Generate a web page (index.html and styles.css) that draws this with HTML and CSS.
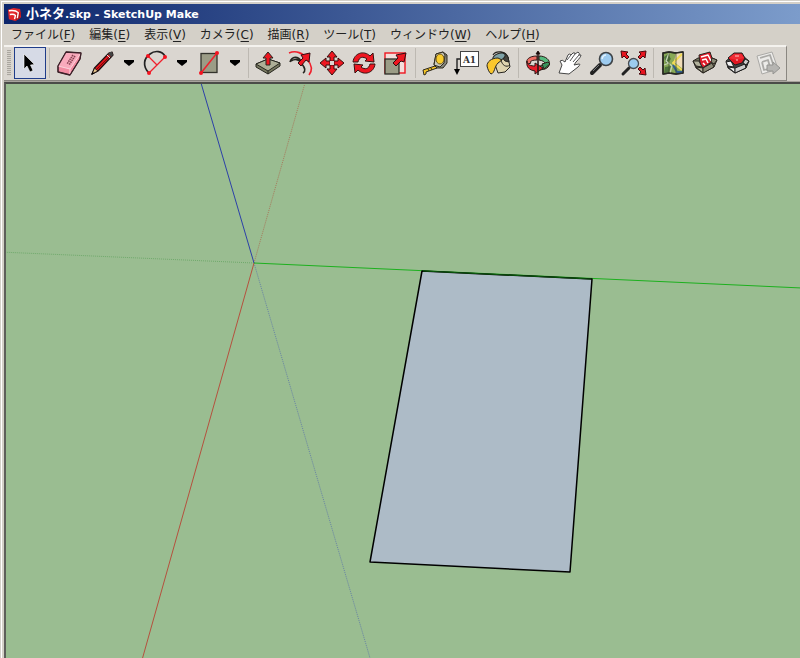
FILE: index.html
```
<!DOCTYPE html>
<html lang="ja">
<head>
    <meta charset="UTF-8">
    <meta name="viewport" content="width=device-width, initial-scale=1.0">
    <title>小ネタ.skp - SketchUp Make</title>
    <link rel="stylesheet" href="styles.css">
</head>
<body>
<div class="window">
    <header class="titlebar">
        <svg class="logo" viewBox="0 0 16 16" aria-hidden="true">
            <path d="M1 3 L7 1 L14 2 L15 11 L9 15 L2 13Z" fill="#e3262b"/>
            <path d="M10 7 L15 5 L14 12 L9 15Z" fill="#b5151b"/>
            <path d="M2 4 Q9 3 12 6 L11 12 M3 8 Q7 7 9 9 L8 13" fill="none" stroke="#fff" stroke-width="1.500"/>
        </svg>
        <h1><span class="file">小ネタ</span>.skp - SketchUp Make</h1>
    </header>

    <nav class="menubar">
        <button type="button">ファイル(<u>F</u>)</button>
        <button type="button">編集(<u>E</u>)</button>
        <button type="button">表示(<u>V</u>)</button>
        <button type="button">カメラ(<u>C</u>)</button>
        <button type="button">描画(<u>R</u>)</button>
        <button type="button">ツール(<u>T</u>)</button>
        <button type="button">ウィンドウ(<u>W</u>)</button>
        <button type="button">ヘルプ(<u>H</u>)</button>
    </nav>

    <div class="toolbar-row">
    <div class="toolbar" role="toolbar" aria-label="ツール">
        <div class="grip"></div>
        <div class="group">
            <button type="button" class="tool active" aria-label="選択">
                <svg viewBox="0 0 32 32"><path d="M10 7 L10 22 L13 19 L16 25 L19 23.500 L16.500 18 L20.500 17.500Z" fill="#000" stroke="#fff" stroke-width=".6"/></svg>
            </button>
        </div>
        <div class="group draw">
            <button type="button" class="tool" aria-label="消しゴム">
                <svg viewBox="0 0 32 32" stroke="#3c2028" stroke-linejoin="round">
                    <path d="M13 5 L28 6 L27 12 L17 28 L5 25 L5 19Z" fill="#f28ba1"/>
                    <path d="M13 5 L28 6 L17 22 L5 19Z" fill="#f9aabc" stroke="none"/>
                    <path d="M5 19 L17 22 L17 28 M17 22 L28 6" fill="none" stroke="#fbd3dc"/>
                    <path d="M13 5 L28 6 L27 12 L17 28 L5 25 L5 19Z" fill="none" stroke-width="1.300"/>
                    <path d="M20 8 L14 17 M22 9 L16 18" stroke="#84404f" stroke-width="1.600" stroke-dasharray="1.500 .7"/>
                </svg>
            </button>
            <div class="split">
                <button type="button" class="tool" aria-label="線">
                    <svg viewBox="0 0 32 32" stroke-linejoin="round">
                        <path d="M6 27 L8.500 21 L23 6 L26 5 L27 8 L12 24Z" fill="#e01118" stroke="#1c1010" stroke-width="1.200"/>
                        <path d="M6 27 L8.500 21 L12 24Z" fill="#e5c58c" stroke="#1c1010"/>
                        <path d="M5 28 L6.500 25 L8.500 26.500Z"/>
                        <path d="M11 22 L23 10" stroke="#7a080c"/>
                        <path d="M22 7 L25 10 L27 8 L26 5 L24 5Z" fill="#444"/><path d="M21 8 L24 11" stroke="#ddd"/>
                    </svg>
                </button>
                <button type="button" class="drop" aria-label="線のメニュー"><svg viewBox="0 0 12 8"><path d="M1 1H11V3L6 7L1 3Z"/></svg></button>
            </div>
            <div class="split">
                <button type="button" class="tool" aria-label="円弧">
                    <svg viewBox="0 0 32 32" fill="none">
                        <path d="M10 26 C3 19 5 11 11 7 C16 3 23 4 26 9" stroke="#222" stroke-width="1.700"/>
                        <path d="M9 9 L18 18 M26 10 L10 26" stroke="#f0202c" stroke-width="1.300"/>
                        <g fill="#f51320"><circle cx="9" cy="9" r="2"/><circle cx="26" cy="10" r="2"/><circle cx="10" cy="26" r="2"/></g>
                    </svg>
                </button>
                <button type="button" class="drop" aria-label="円弧のメニュー"><svg viewBox="0 0 12 8"><path d="M1 1H11V3L6 7L1 3Z"/></svg></button>
            </div>
            <div class="split">
                <button type="button" class="tool" aria-label="長方形">
                    <svg viewBox="0 0 32 32">
                        <rect x="9" y="6.500" width="16" height="19" fill="#9b9c86" stroke="#33332c" stroke-width="1.300"/>
                        <path d="M9 26 L25 6" stroke="#f0202c" stroke-width="1.500"/>
                        <circle cx="9" cy="26" r="2" fill="#f51320"/><circle cx="25" cy="6" r="2" fill="#f51320"/>
                    </svg>
                </button>
                <button type="button" class="drop" aria-label="長方形のメニュー"><svg viewBox="0 0 12 8"><path d="M1 1H11V3L6 7L1 3Z"/></svg></button>
            </div>
        </div>
        <div class="group">
            <button type="button" class="tool" aria-label="プッシュ/プル">
                <svg viewBox="0 0 32 32" stroke="#26261f" stroke-linejoin="round">
                    <path d="M4 17 L16 12 L28 16 L28 19 L16 27 L4 20Z" fill="#77785f"/>
                    <path d="M4 17 L16 12 L28 16 L16 24Z" fill="#adae96"/>
                    <path d="M16 24 V27" fill="none"/>
                    <path d="M14 18 V11 H11 L16 5 L21 11 H18 V18Z" fill="#ee1620"/>
                </svg>
            </button>
            <button type="button" class="tool" aria-label="オフセット">
                <svg viewBox="0 0 32 32" fill="none">
                    <path d="M5 6 C12 3 19 6 23 12 C28 18 29 23 25 28" stroke="#f0202c" stroke-width="1.600"/>
                    <path d="M6 15 C8 9 14 9 17 14 M7 14 C12 11 16 13 18 17 C21 21 22 24 19 26" stroke="#25251f" stroke-width="1.600"/>
                    <path d="M14 16 L19 11 L17 8 L26 6 L25 15 L22 13 L17 19Z" fill="#ee1620" stroke="#330a0d" stroke-linejoin="round"/>
                </svg>
            </button>
            <button type="button" class="tool" aria-label="移動">
                <svg viewBox="0 0 32 32" fill="#ee1620" stroke="#35100f" stroke-linejoin="round">
                    <path d="M16 4 L21 10 H18 V14 H14 V10 H11Z"/><path d="M16 28 L11 22 H14 V18 H18 V22 H21Z"/>
                    <path d="M4 16 L10 11 V14 H14 V18 H10 V21Z"/><path d="M28 16 L22 21 V18 H18 V14 H22 V11Z"/>
                    <rect x="14" y="14" width="4" height="4" fill="#ddd9d2" stroke="none"/>
                </svg>
            </button>
            <button type="button" class="tool" aria-label="回転">
                <svg viewBox="0 0 32 32" fill="#ee1620" stroke="#35100f" stroke-linejoin="round">
                    <path d="M5 15 C6 6 16 3 22 9 L25 6 L26 15 L17 14 L19 12 C15 9 11 10 10 15Z"/>
                    <path d="M27 17 C26 26 16 29 10 23 L7 26 L6 17 L15 18 L13 20 C17 23 21 22 22 17Z"/>
                </svg>
            </button>
            <button type="button" class="tool" aria-label="尺度">
                <svg viewBox="0 0 32 32">
                    <rect x="5" y="6" width="20" height="20" fill="#f3dedb" stroke="#ee1620" stroke-width="1.400"/>
                    <rect x="5" y="12" width="14" height="15" fill="#9b9c86" stroke="#2c2c25" stroke-width="1.300"/>
                    <path d="M13 16 L18 11 L16 8 L26 6 L24 15 L21 14 L16 19Z" fill="#ee1620" stroke="#330a0d" stroke-linejoin="round"/>
                </svg>
            </button>
        </div>
        <div class="group">
            <button type="button" class="tool" aria-label="メジャー">
                <svg viewBox="0 0 32 32" stroke="#2e2a1d" stroke-linejoin="round">
                    <path d="M17 7 L24 5 L28 8 L28 16 L24 21 L17 21 L15 17Z" fill="#85857d"/>
                    <path d="M17 7 L24 5 L26 8 L25 16 L21 20 L15 18Z" fill="#c9c9bd"/>
                    <ellipse cx="21" cy="12" rx="4" ry="5" fill="#f8cc2d" stroke="#6d5412"/>
                    <path d="M16 19 L4 23 L5 28 L7 27 L7 25 L18 21Z" fill="#f4c427"/>
                    <path d="M9 22 L10 24 M12 21 L13 23" fill="none"/>
                </svg>
            </button>
            <button type="button" class="tool" aria-label="テキスト">
                <svg viewBox="0 0 32 32">
                    <path d="M10 12 H6 V24" fill="none" stroke="#222" stroke-width="1.400"/>
                    <path d="M3 22 H9 L6 28Z"/>
                    <rect x="9.500" y="4.500" width="18" height="15" fill="#fff" stroke="#444"/>
                    <text x="18.500" y="16" text-anchor="middle" class="label">A1</text>
                </svg>
            </button>
            <button type="button" class="tool" aria-label="ペイント">
                <svg viewBox="0 0 32 32" stroke="#262521" stroke-linejoin="round">
                    <path d="M10 8 C13 3 23 4 25 11" fill="none" stroke-width="1.300"/>
                    <path d="M10 12 L22 6 L25 10 L27 20 L22 25 L15 26Z" fill="#ded3ae"/>
                    <path d="M22 6 L25 10 L26 15 L22 14 L18 9Z" fill="#45453f"/>
                    <ellipse cx="16" cy="10" rx="6.500" ry="3.500" transform="rotate(-22 16 10)" fill="#7fa3a8"/>
                    <path d="M15 11 C8 11 4 15 4 19 C5 23 6 25 8 27 C12 26 11 20 15 16 L19 13Z" fill="#fac72c"/>
                    <path d="M18 13 C19 18 23 21 27 18" fill="none"/>
                </svg>
            </button>
        </div>
        <div class="group">
            <button type="button" class="tool" aria-label="オービット">
                <svg viewBox="0 0 32 32" stroke="#2b1715" stroke-linejoin="round">
                    <path d="M17 9 C28 9 31 19 23 22 L18 23 L18 19 C25 18 24 14 17 13Z" fill="#55b97d"/>
                    <path d="M15 9 C5 9 3 15 6 17 L9 16 C7 14 11 13 15 13Z" fill="#ed6c62"/>
                    <path d="M5 14 C5 18 9 19 13 19 L13 16 L21 21 L13 27 L13 24 C7 23 4 20 5 14Z" fill="#e61d2a"/>
                    <path d="M22 22 L20 17 L26 15 L28 17Z" fill="#39945d"/>
                    <path d="M16 5 V28" stroke-width="1.600"/><path d="M14 7 L16 4 L18 7Z"/>
                </svg>
            </button>
            <button type="button" class="tool" aria-label="パン表示">
                <svg viewBox="0 0 32 32">
                    <path d="M5 26 L8 18 L6 14 Q8 12 11 15 L14 8 Q15 6 17 8 L19 6 Q21 5 21 7 L24 5 Q26 6 25 8 L27 8 Q27 10 22 15 L20 18 L25 17 Q27 17 24 20 L15 27Z" fill="#fff" stroke="#464646" stroke-linejoin="round"/>
                    <path d="M13 13 L17 8 M16 14 L21 7 M19 15 L25 8" fill="none" stroke="#555"/>
                </svg>
            </button>
            <button type="button" class="tool" aria-label="ズーム">
                <svg viewBox="0 0 32 32">
                    <path d="M6 26 L14 18" stroke="#222" stroke-width="4" stroke-linecap="round"/>
                    <path d="M7 24 L13 18" stroke="#74777a"/>
                    <circle cx="20" cy="12" r="6.500" fill="#9dcbef" stroke="#3d4246" stroke-width="1.600"/>
                    <path d="M16 12 Q17 8 20 8" fill="none" stroke="#e3f2fd" stroke-width="1.500"/>
                </svg>
            </button>
            <button type="button" class="tool" aria-label="全体表示">
                <svg viewBox="0 0 32 32">
                    <path d="M5 27 L11 21" stroke="#222" stroke-width="3" stroke-linecap="round"/>
                    <circle cx="15.500" cy="16.500" r="5" fill="#9dcbef" stroke="#474b50" stroke-width="1.300"/>
                    <g fill="#e61520" stroke="#49090d" stroke-linejoin="round">
                        <path d="M3 4 L10 5 L8 7 L11 10 L9 12 L6 9 L4 11Z"/>
                        <path d="M28 4 L27 11 L25 9 L22 12 L20 10 L23 7 L21 5Z"/>
                        <path d="M28 28 L21 27 L23 25 L20 22 L22 20 L25 23 L27 21Z"/>
                    </g>
                </svg>
            </button>
        </div>
        <div class="group">
            <button type="button" class="tool" aria-label="場所を追加">
                <svg viewBox="0 0 32 32" stroke-linejoin="round">
                    <path d="M6 6 L12 5 L19 6 L26 5 L26 26 L19 27 L12 26 L6 27Z" fill="#88a955" stroke="#282923" stroke-width="1.500"/>
                    <path d="M19 6 L26 5 V22 L17 15Z" fill="#f0ddb8"/>
                    <path d="M7 10 L11 7 L14 12 L9 17Z M8 20 L14 19 L12 25 L7 26Z" fill="#4e743d"/>
                    <path d="M12 6 L9 14 L15 19 L13 26 M7 18 L12 16" fill="none" stroke="#c5d3b4" stroke-width="1.300"/>
                    <path d="M25 7 L16 16 L25 23" fill="none" stroke="#f3dc55" stroke-width="2"/>
                    <path d="M16 18 L20 25 L26 25" fill="none" stroke="#305f91" stroke-width="2"/>
                    <path d="M12 5 V26 M19 6 V27" stroke="#3d482b" stroke-width=".7"/>
                    <path d="M6 6 L12 5 L19 6 L26 5 L26 26 L19 27 L12 26 L6 27Z" fill="none" stroke="#282923" stroke-width="1.300"/>
                </svg>
            </button>
            <button type="button" class="tool" aria-label="モデルを取得">
                <svg viewBox="0 0 32 32" stroke="#29251f" stroke-linejoin="round">
                    <path d="M4 14 L9 11 L23 11 L28 13 L25 20 L14 26 L7 21Z" fill="#74745f"/>
                    <path d="M10 8 L21 5 L24 14 L14 21 L11 17Z" fill="#e01c29"/>
                    <path d="M12 10 L19 8 L22 14 M13 13 L17 12 L19 16 M14 16 L16 18" fill="none" stroke="#fff" stroke-width="1.500"/>
                    <path d="M4 14 L10 14 L13 20 L7 19Z M7 20 L14 21 L14 26Z" fill="#b3b29c"/>
                    <path d="M14 21 L23 16 L25 20 L14 26Z M23 11 L28 13 L25 17 L22 15Z" fill="#8c8b77"/>
                </svg>
            </button>
            <button type="button" class="tool" aria-label="Extension Warehouse">
                <svg viewBox="0 0 32 32" stroke="#1f1f1f" stroke-linejoin="round">
                    <path d="M5 14 L10 10 L23 10 L28 14 L25 21 L14 26 L7 21Z" fill="#444"/>
                    <path d="M5 15 L10 14 L13 20 L7 19Z M7 20 L14 21 L14 26Z" fill="#f2f2f2"/>
                    <path d="M14 21 L24 17 L25 21 L14 26Z M24 12 L28 14 L25 18 L22 16Z" fill="#cfcfcf"/>
                    <path d="M7 11 L13 6 L21 6 L24 11 L21 16 L14 18Z" fill="#df1722"/>
                    <path d="M8 11 L13 7 L20 7 L23 11 L15 13Z" fill="#f02c35" stroke="none"/>
                    <path d="M14 9 L18 9 M16 12 L16 14" stroke="#ffc4c4"/>
                </svg>
            </button>
            <button type="button" class="tool" aria-label="LayOut に送信" disabled>
                <svg viewBox="0 0 32 32" stroke="#aaa9a6" stroke-linejoin="round">
                    <path d="M4 9 L19 5 L25 22 L9 27Z" fill="#ecebe9"/>
                    <path d="M7 11 L17 8 L21 20 M9 15 L15 13 L17 20 M9 15 L11 23 L15 22" fill="none" stroke-width="1.800"/>
                    <path d="M14 18 H20 V15 L27 21 L20 27 V24 H14Z" fill="#b6b5b2" stroke="#949491"/>
                </svg>
            </button>
        </div>
    </div>
    </div>

    <main class="viewport">
        <svg class="scene" viewBox="6 84 794 574" preserveAspectRatio="xMinYMin slice" role="img" aria-label="モデル">
            <!-- negative half of each axis -->
            <g fill="none" stroke-dasharray="1 1">
                <path d="M254 263 L305 83" stroke="#a67a5c"/>
                <path d="M254 263 L0 252" stroke="#6fa96b"/>
                <path d="M254 263 L370 658" stroke="#6883a4"/>
            </g>
            <g fill="none">
                <path d="M254 263 L201 83" stroke="#2c40a8"/>
                <path d="M254 263 L142 660" stroke="#b5513e"/>
                <path d="M254 263 L802 288" stroke="#1cb01e"/>
            </g>
            <path d="M422 271 L592 279 L570 572 L370 562Z" fill="#adbbc7" stroke="#000" stroke-width="1.500" stroke-linejoin="round"/>
            <path d="M423 271 L591 279" stroke="#0b590d"/>
        </svg>
    </main>
</div>
</body>
</html>
```
FILE: styles.css
```
* {
    box-sizing: border-box;
}
body {
    margin: 0;
    background: #d4d0c8;
    font-family: "DejaVu Sans", "Noto Sans CJK JP", sans-serif;
    font-size: 12px;
    color: #222;
}
button {
    border: 0;
    padding: 0;
    background: none;
    font: inherit;
    color: inherit;
}
svg {
    display: block;
}
.window {
    display: flex;
    flex-direction: column;
    height: 100vh;
    padding: 4px 0 0 4px;
    overflow: hidden;
    box-shadow: inset 1px 1px #d4d0c8, inset 2px 2px #fff;
}
.titlebar {
    display: flex;
    align-items: center;
    gap: 4px;
    height: 20px;
    padding-left: 3px;
    background: linear-gradient(to right, #0c256b, #7c9ccb);
    color: #fff;
}
.titlebar h1 {
    margin: 0;
    font: bold 11px/20px "DejaVu Sans", "Noto Sans CJK JP", sans-serif;
}
.titlebar .file {
    font-size: 13px;
}
.logo {
    width: 15px;
    height: 15px;
}
.menubar {
    display: flex;
    height: 21px;
}
.menubar button {
    padding: 0 7px;
    line-height: 18px;
    white-space: nowrap;
}
.menubar u {
    text-underline-offset: 2px;
}
.toolbar-row {
    display: flex;
    height: 37px;
    border-bottom: 1px solid #a8a49d;
}
.toolbar {
    display: flex;
    align-items: flex-start;
    padding-right: 1px;
    background: #dad6d0;
    border-top: 2px solid #f4f2ee;
    border-right: 1px solid #8a8781;
    border-bottom: 1px solid #8a8781;
}
.grip {
    width: 4px;
    height: 26px;
    margin: 3px;
    background: repeating-linear-gradient(#aaa69f 0 1px, #d6d2cb 1px 2px);
}
.group {
    display: flex;
}
.group + .group::before {
    content: "";
    width: 1px;
    height: 30px;
    margin: 1px 3px;
    background: #bdb9b2;
}
.draw {
    padding-right: 1px;
}
.tool svg {
    width: 32px;
    height: 32px;
}
.tool.active {
    background: #d6dae6;
    box-shadow: inset 0 0 0 1px #1f3c8a;
}
.split {
    display: flex;
}
.split .tool {
    padding: 0 1px;
}
.drop {
    width: 19px;
}
.drop svg {
    width: 12px;
    height: 8px;
    margin: 0 auto;
}
.label {
    font: bold 9px "DejaVu Serif", serif;
    fill: #333;
}
.viewport {
    flex: 1;
    min-height: 0;
    border-top: 2px solid #4a4c48;
    border-left: 2px solid #5d5e5a;
    background: #9abd91;
}
.scene {
    width: 100%;
    height: 100%;
}
```
